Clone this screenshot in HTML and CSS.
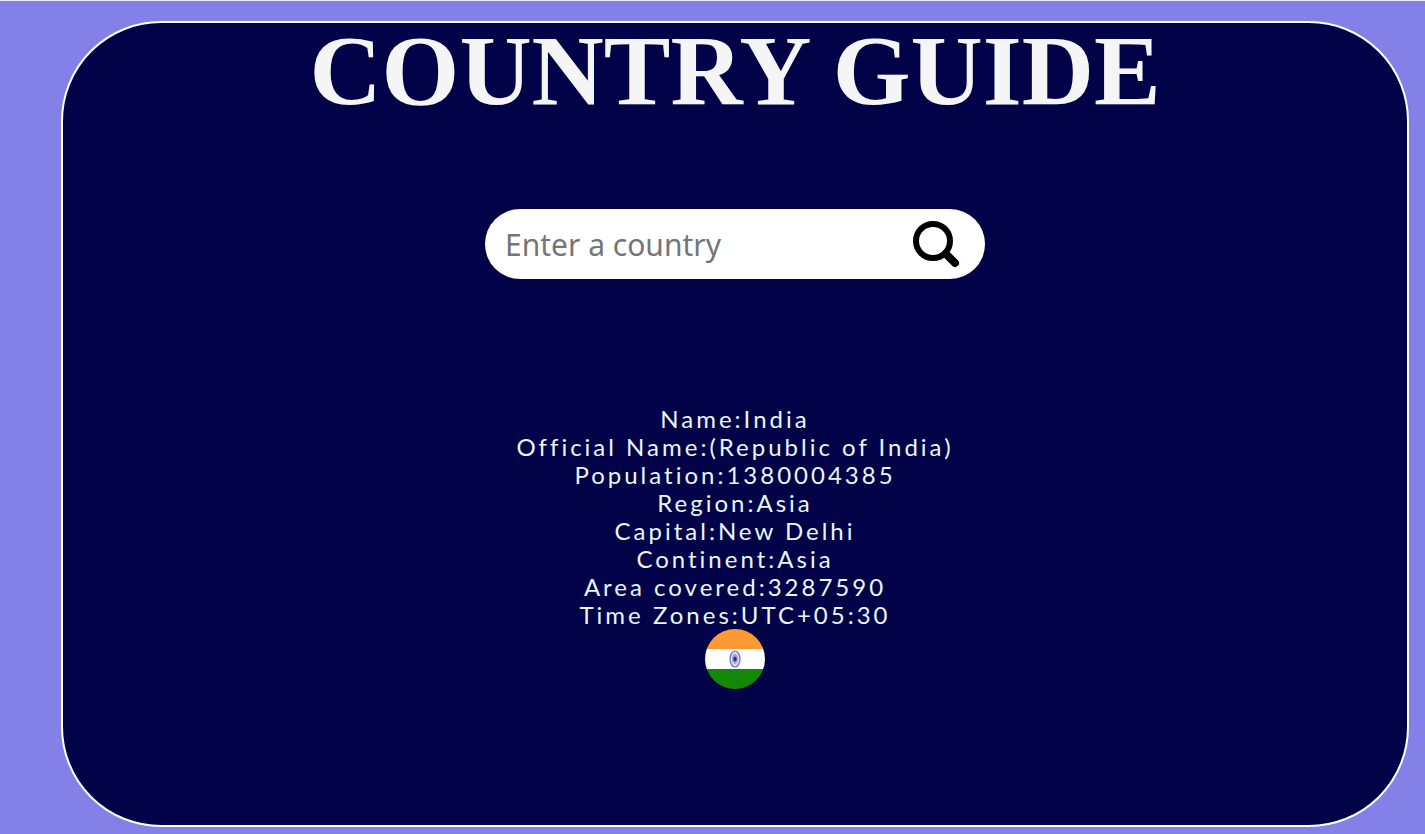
FILE: index.html
```html
<!DOCTYPE html>
<html lang="en">
<head>
  <meta charset="utf-8">
  <meta name="viewport" content="width=device-width, initial-scale=1">
  <title>Country Guide</title>
  <link rel="stylesheet" href="styles.css">
</head>
<body>
  <main class="card">
    <h1 class="title">COUNTRY GUIDE</h1>
    <form class="search" role="search">
      <input class="search-input" type="text" placeholder="Enter a country" aria-label="Enter a country">
      <button class="search-button" type="button" aria-label="Search">
        <svg class="search-icon" viewBox="0 0 60 60" aria-hidden="true">
          <circle cx="28" cy="27" r="17" fill="none" stroke="#000" stroke-width="6"/>
          <path d="M38 37l6 6" stroke="#000" stroke-width="6"/>
          <path d="M43 42l7 7" stroke="#000" stroke-width="8" stroke-linecap="round"/>
        </svg>
      </button>
    </form>
    <section class="details">
      <p class="detail">Name:India</p>
      <p class="detail">Official Name:(Republic of India)</p>
      <p class="detail">Population:1380004385</p>
      <p class="detail">Region:Asia</p>
      <p class="detail">Capital:New Delhi</p>
      <p class="detail">Continent:Asia</p>
      <p class="detail">Area covered:3287590</p>
      <p class="detail">Time Zones:UTC+05:30</p>
      <svg class="flag" viewBox="0 0 60 60" role="img" aria-label="Flag of India">
        <rect width="60" height="20" fill="#ff9933"/>
        <rect y="20" width="60" height="20" fill="#fff"/>
        <rect y="40" width="60" height="20" fill="#138808"/>
        <ellipse cx="30" cy="30" rx="5" ry="8" fill="#dedef2" stroke="#6a6ab8" stroke-width="1.2"/>
        <ellipse cx="30" cy="30" rx="3" ry="5" fill="#a2a2d6"/>
        <ellipse cx="30" cy="30" rx="1.7" ry="2.5" fill="#30308f"/>
      </svg>
    </section>
  </main>
</body>
</html>
```

FILE: styles.css
```css
* {
  box-sizing: border-box;
}

body {
  margin: 0;
  min-height: 100vh;
  display: flex;
  padding: 20px 16px 7px 61px;
  border-top: 1px solid #ececec;
  background: #8381e7;
}

.card {
  flex: 1;
  display: flex;
  flex-direction: column;
  align-items: center;
  border: 2px solid #fff;
  border-radius: 100px;
  background: #020249;
}

.title {
  margin: 0;
  font: bold 100px/96px "Times New Roman", "Liberation Serif", serif;
  color: #f5f5f5;
  text-align: center;
}

.search {
  display: flex;
  align-items: center;
  width: 500px;
  max-width: 100%;
  height: 70px;
  margin-top: 90px;
  padding: 0 20px;
  border-radius: 35px;
  background: #fff;
}

.search-input {
  flex: 1;
  min-width: 0;
  padding: 2px 0 0;
  border: 0;
  outline: 0;
  background: transparent;
  font: 30px/40px "Comic Sans MS", "Noto Sans", sans-serif;
}

.search-input::placeholder {
  color: #757575;
  opacity: 1;
}

.search-button {
  width: 60px;
  height: 60px;
  padding: 0;
  border: 0;
  border-radius: 50%;
  background: transparent;
  cursor: pointer;
}

.search-icon {
  display: block;
  width: 60px;
  height: 60px;
}

.details {
  display: flex;
  flex-direction: column;
  align-items: center;
  margin-top: 126px;
  font: 24px/28px "Gill Sans MT", Lato, sans-serif;
  letter-spacing: 3px;
  color: #e6f7f5;
  text-align: center;
}

.detail {
  margin: 0;
}

.flag {
  width: 60px;
  height: 60px;
  border-radius: 50%;
}
```
